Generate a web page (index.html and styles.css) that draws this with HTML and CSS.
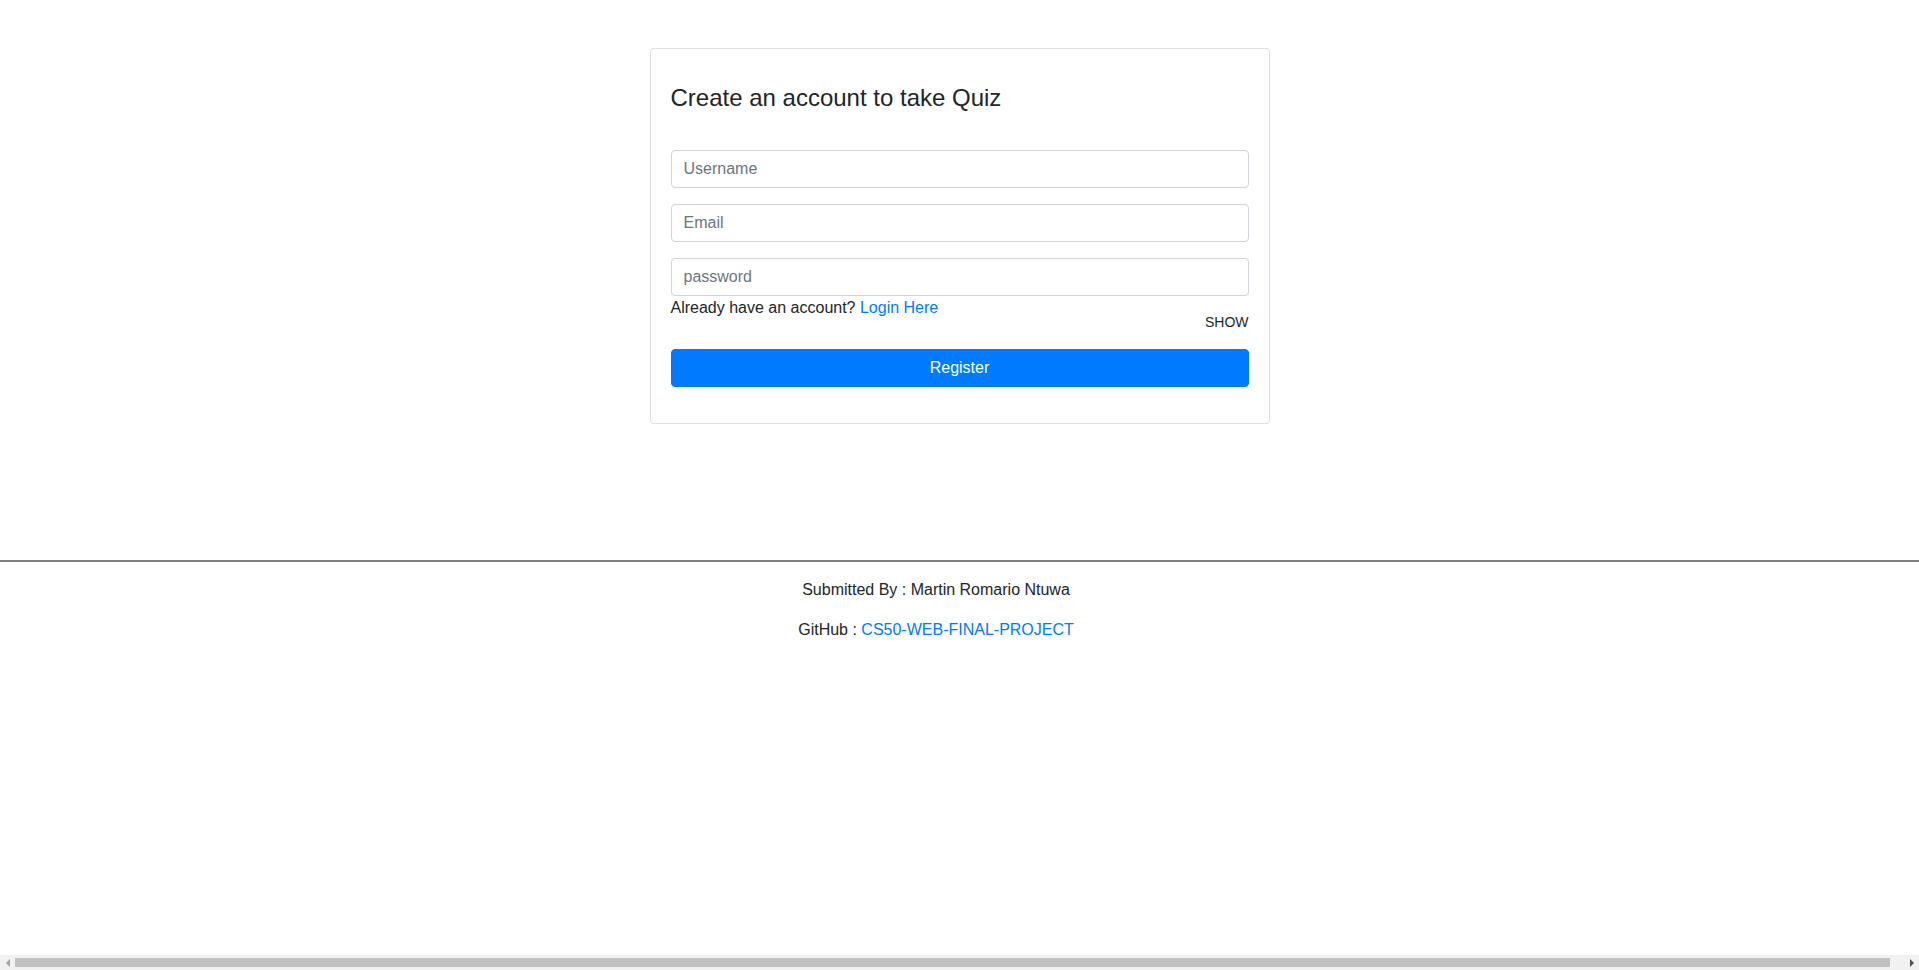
FILE: index.html
```html
<!DOCTYPE html>
<html lang="en">
<head>
<meta charset="utf-8">
<title>Register</title>
<link rel="stylesheet" href="styles.css">
</head>
<body>
<div class="app">
  <main class="page">
    <div class="card">
      <h4 class="title">Create an account to take Quiz</h4>
      <form class="form">
        <input class="field" type="text" placeholder="Username">
        <input class="field" type="email" placeholder="Email">
        <input class="field field-last" type="password" placeholder="password">
        <div class="meta">
          <span class="meta-text">Already have an account? <a class="link" href="#">Login Here</a></span>
          <span class="show">SHOW</span>
        </div>
        <button class="btn" type="button">Register</button>
      </form>
    </div>
  </main>
  <footer class="footer">
    <div class="row">
      <hr class="rule">
      <p class="line">Submitted By : Martin Romario Ntuwa</p>
      <p class="line">GitHub : <a class="link" href="#">CS50-WEB-FINAL-PROJECT</a></p>
    </div>
  </footer>
  <div class="hscroll" aria-hidden="true">
    <span class="hs-btn"><span class="arrow-left"></span></span>
    <span class="hs-track"><span class="hs-thumb"></span></span>
    <span class="hs-btn"><span class="arrow-right"></span></span>
  </div>
</div>
</body>
</html>
```
FILE: styles.css
```css
html, body {
  margin: 0;
  padding: 0;
  background: #fff;
  height: 100%;
  overflow: hidden;
}
body {
  font-family: "Liberation Sans", Arial, sans-serif;
  font-size: 16px;
  line-height: 1.5;
  color: #212529;
}
* { box-sizing: border-box; }

.app {
  height: 100vh;
  display: flex;
  flex-direction: column;
  overflow: hidden;
}
.page {
  display: flex;
  justify-content: center;
  padding-top: 48px;
}
.card {
  width: 620px;
  border: 1px solid rgba(0, 0, 0, 0.125);
  border-radius: 4px;
  padding: 20px 20px 36px;
  background: #fff;
}
.title {
  margin: 15px 0 37px;
  font-size: 24px;
  font-weight: 500;
  line-height: 1.2;
}
.form {
  display: flex;
  flex-direction: column;
}
.field {
  display: block;
  width: 100%;
  height: 38px;
  padding: 6px 12px;
  margin: 0 0 16px;
  font-family: inherit;
  font-size: 16px;
  line-height: 1.5;
  color: #495057;
  background: #fff;
  border: 1px solid #ced4da;
  border-radius: 4px;
}
.field::placeholder { color: #6c757d; opacity: 1; }
.field-last { margin-bottom: 0; }
.meta {
  display: flex;
  justify-content: space-between;
  align-items: flex-start;
}
.show {
  margin-top: 16px;
  font-size: 14px;
  line-height: 21px;
  color: #212529;
}
.link {
  color: #007bff;
  text-decoration: none;
}
.btn {
  margin-top: 16px;
  height: 38px;
  width: 100%;
  border: 1px solid #007bff;
  border-radius: 4px;
  background: #007bff;
  color: #fff;
  font-family: inherit;
  font-size: 16px;
  line-height: 1.5;
  padding: 6px 12px;
}
.footer {
  margin-top: 136px;
}
.row {
  margin: 0 -15px 0 0;
  text-align: center;
}
.rule {
  margin: 0 0 16px;
  height: 0;
  border: 0;
  border-top: 2px solid #7f7f7f;
}
.line {
  margin: 0 0 16px;
  padding-right: 62px;
}

/* horizontal scrollbar strip */
.hscroll {
  margin-top: auto;
  flex: 0 0 15px;
  height: 15px;
  display: flex;
  background: #f1f1f1;
}
.hs-btn {
  flex: 0 0 15px;
  display: flex;
  align-items: center;
  justify-content: center;
}
.hs-track {
  flex: 1;
  display: flex;
  align-items: center;
}
.hs-thumb {
  width: 99.25%;
  height: 9px;
  background: #c1c1c1;
}
.arrow-left {
  width: 0;
  height: 0;
  border-top: 4px solid transparent;
  border-bottom: 4px solid transparent;
  border-right: 4px solid #a3a3a3;
}
.arrow-right {
  width: 0;
  height: 0;
  border-top: 4px solid transparent;
  border-bottom: 4px solid transparent;
  border-left: 4px solid #505050;
}
```
